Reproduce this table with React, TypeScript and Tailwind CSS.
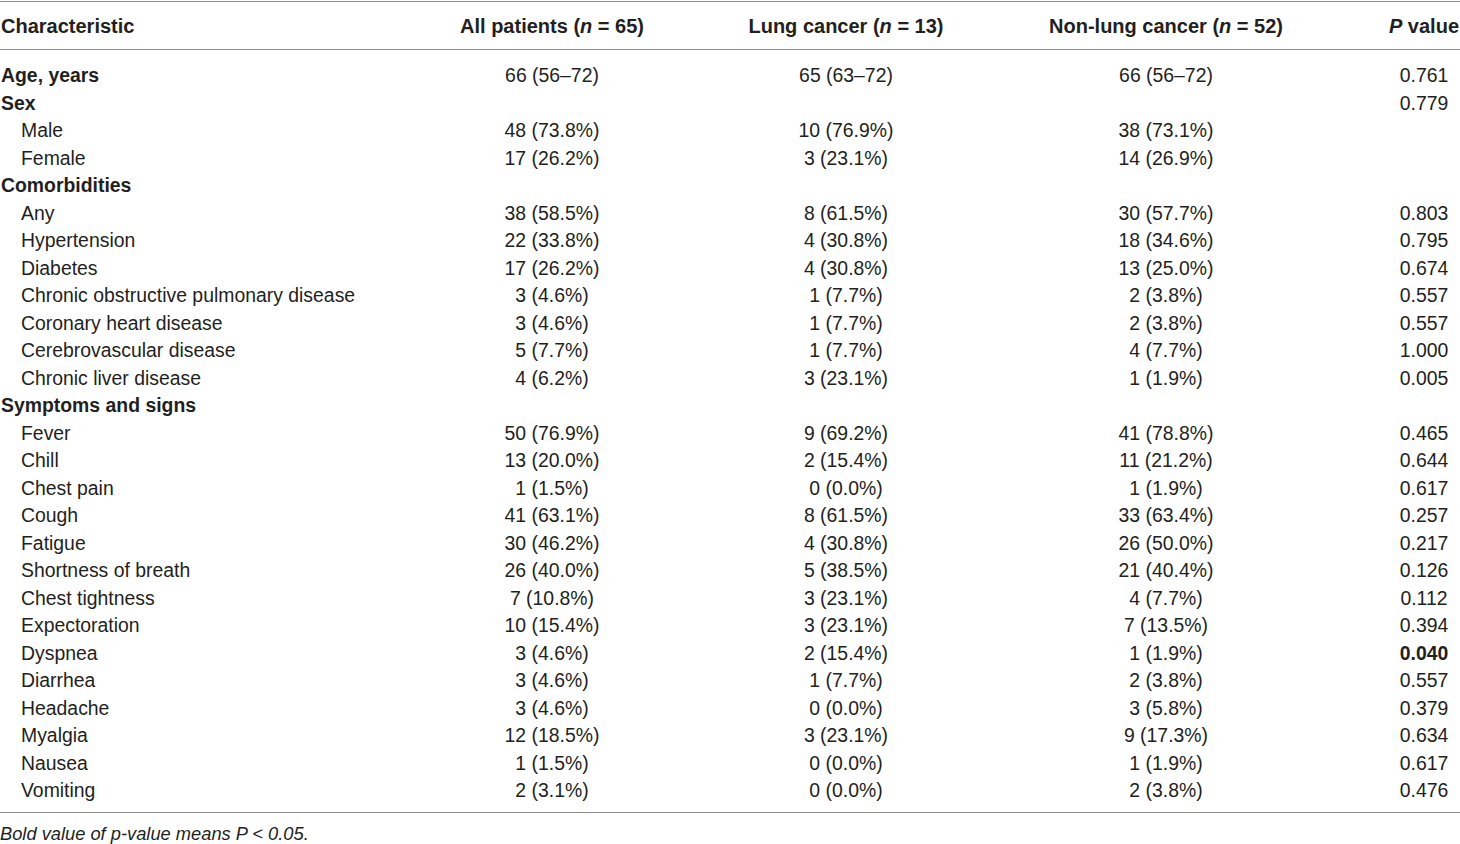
import React from "react";

type Row = {
  label: string;
  bold?: boolean;
  indent?: boolean;
  a?: string;
  b?: string;
  c?: string;
  p?: string;
  pBold?: boolean;
};

const rows: Row[] = [
  { label: "Age, years", bold: true, a: "66 (56–72)", b: "65 (63–72)", c: "66 (56–72)", p: "0.761" },
  { label: "Sex", bold: true, p: "0.779" },
  { label: "Male", indent: true, a: "48 (73.8%)", b: "10 (76.9%)", c: "38 (73.1%)" },
  { label: "Female", indent: true, a: "17 (26.2%)", b: "3 (23.1%)", c: "14 (26.9%)" },
  { label: "Comorbidities", bold: true },
  { label: "Any", indent: true, a: "38 (58.5%)", b: "8 (61.5%)", c: "30 (57.7%)", p: "0.803" },
  { label: "Hypertension", indent: true, a: "22 (33.8%)", b: "4 (30.8%)", c: "18 (34.6%)", p: "0.795" },
  { label: "Diabetes", indent: true, a: "17 (26.2%)", b: "4 (30.8%)", c: "13 (25.0%)", p: "0.674" },
  { label: "Chronic obstructive pulmonary disease", indent: true, a: "3 (4.6%)", b: "1 (7.7%)", c: "2 (3.8%)", p: "0.557" },
  { label: "Coronary heart disease", indent: true, a: "3 (4.6%)", b: "1 (7.7%)", c: "2 (3.8%)", p: "0.557" },
  { label: "Cerebrovascular disease", indent: true, a: "5 (7.7%)", b: "1 (7.7%)", c: "4 (7.7%)", p: "1.000" },
  { label: "Chronic liver disease", indent: true, a: "4 (6.2%)", b: "3 (23.1%)", c: "1 (1.9%)", p: "0.005" },
  { label: "Symptoms and signs", bold: true },
  { label: "Fever", indent: true, a: "50 (76.9%)", b: "9 (69.2%)", c: "41 (78.8%)", p: "0.465" },
  { label: "Chill", indent: true, a: "13 (20.0%)", b: "2 (15.4%)", c: "11 (21.2%)", p: "0.644" },
  { label: "Chest pain", indent: true, a: "1 (1.5%)", b: "0 (0.0%)", c: "1 (1.9%)", p: "0.617" },
  { label: "Cough", indent: true, a: "41 (63.1%)", b: "8 (61.5%)", c: "33 (63.4%)", p: "0.257" },
  { label: "Fatigue", indent: true, a: "30 (46.2%)", b: "4 (30.8%)", c: "26 (50.0%)", p: "0.217" },
  { label: "Shortness of breath", indent: true, a: "26 (40.0%)", b: "5 (38.5%)", c: "21 (40.4%)", p: "0.126" },
  { label: "Chest tightness", indent: true, a: "7 (10.8%)", b: "3 (23.1%)", c: "4 (7.7%)", p: "0.112" },
  { label: "Expectoration", indent: true, a: "10 (15.4%)", b: "3 (23.1%)", c: "7 (13.5%)", p: "0.394" },
  { label: "Dyspnea", indent: true, a: "3 (4.6%)", b: "2 (15.4%)", c: "1 (1.9%)", p: "0.040", pBold: true },
  { label: "Diarrhea", indent: true, a: "3 (4.6%)", b: "1 (7.7%)", c: "2 (3.8%)", p: "0.557" },
  { label: "Headache", indent: true, a: "3 (4.6%)", b: "0 (0.0%)", c: "3 (5.8%)", p: "0.379" },
  { label: "Myalgia", indent: true, a: "12 (18.5%)", b: "3 (23.1%)", c: "9 (17.3%)", p: "0.634" },
  { label: "Nausea", indent: true, a: "1 (1.5%)", b: "0 (0.0%)", c: "1 (1.9%)", p: "0.617" },
  { label: "Vomiting", indent: true, a: "2 (3.1%)", b: "0 (0.0%)", c: "2 (3.8%)", p: "0.476" },
];

const grid = "grid grid-cols-[440px_224px_364px_276px_1fr]";

export default function App() {
  return (
    <div
      className="w-[1460px] bg-white text-[#231f20] text-[19.4px] pt-[0.5px]"
      style={{ fontFamily: '"Liberation Sans", Arial, sans-serif' }}
    >
      <div className="border-t-[1.5px] border-[#8c8c8c]" />
      <div className={`${grid} h-[48.5px] items-center font-bold text-[20px] border-b-[1.5px] border-[#8c8c8c] pt-[2px]`}>
        <div className="pl-[1px]">Characteristic</div>
        <div className="text-center">
          All patients (<i>n</i> = 65)
        </div>
        <div className="text-center">
          Lung cancer (<i>n</i> = 13)
        </div>
        <div className="text-center">
          Non-lung cancer (<i>n</i> = 52)
        </div>
        <div className="pl-[84px] text-center whitespace-nowrap">
          <i>P</i> value
        </div>
      </div>
      <div className="pt-[12px] pb-[7px] border-b-[1.5px] border-[#8c8c8c]">
        {rows.map((r, i) => (
          <div key={i} className={`${grid} h-[27.5px] leading-[27.5px]`}>
            <div className={r.bold ? "font-bold pl-[1px]" : "pl-[21px] whitespace-nowrap"}>{r.label}</div>
            <div className="text-center">{r.a ?? ""}</div>
            <div className="text-center">{r.b ?? ""}</div>
            <div className="text-center">{r.c ?? ""}</div>
            <div className={`pl-[84px] text-center ${r.pBold ? "font-bold" : ""}`}>{r.p ?? ""}</div>
          </div>
        ))}
      </div>
      <div className="pt-[11px] text-[18.3px] italic leading-[20px]">
        Bold value of p-value means P &lt; 0.05.
      </div>
    </div>
  );
}
